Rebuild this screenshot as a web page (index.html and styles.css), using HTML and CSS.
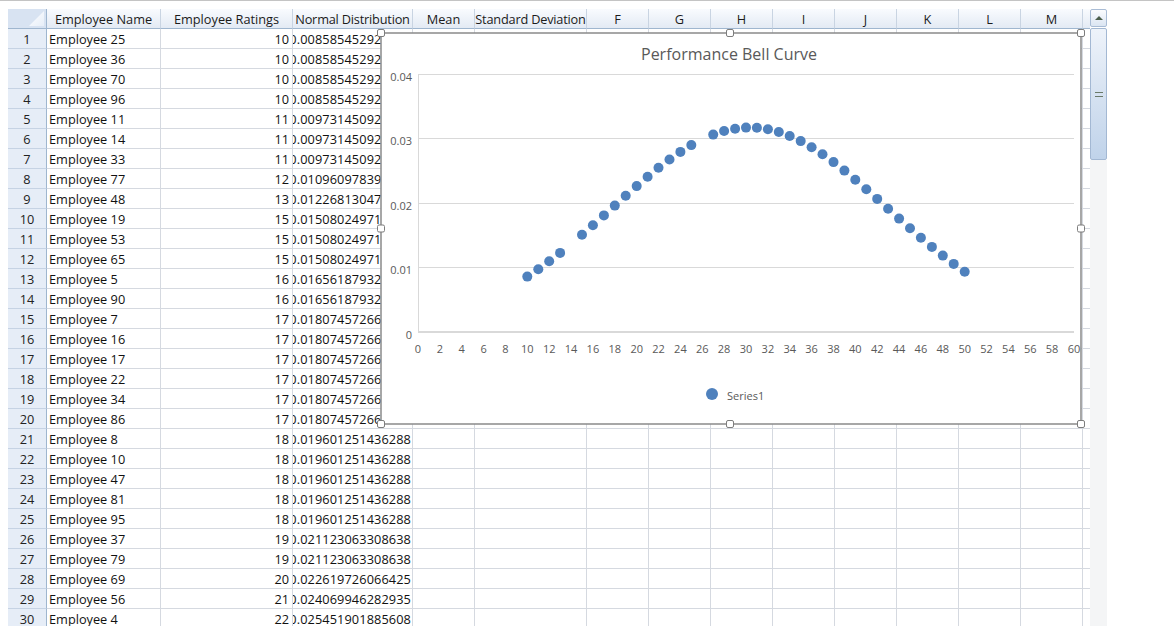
FILE: index.html
```html
<!DOCTYPE html>
<html>
<head>
<meta charset="utf-8">
<title>Performance Bell Curve</title>
<link rel="stylesheet" href="styles.css">
</head>
<body>
<div class="top-rule"></div>
<div class="app">
  <div class="sheet">
    <div class="hrow">
      <div class="corner"></div>
      <div>Employee Name</div><div>Employee Ratings</div><div class="tight">Normal Distribution</div><div>Mean</div><div class="tight">Standard Deviation</div>
      <div>F</div><div>G</div><div>H</div><div>I</div><div>J</div><div>K</div><div>L</div><div>M</div><div></div>
    </div>
    <div class="row"><b>1</b><span class="nm">Employee 25</span><span class="num">10</span><span class="dist">0.008585452924015</span><i></i><i></i><i></i><i></i><i></i><i></i><i></i><i></i><i></i><i></i><i></i></div>
    <div class="row"><b>2</b><span class="nm">Employee 36</span><span class="num">10</span><span class="dist">0.008585452924015</span><i></i><i></i><i></i><i></i><i></i><i></i><i></i><i></i><i></i><i></i><i></i></div>
    <div class="row"><b>3</b><span class="nm">Employee 70</span><span class="num">10</span><span class="dist">0.008585452924015</span><i></i><i></i><i></i><i></i><i></i><i></i><i></i><i></i><i></i><i></i><i></i></div>
    <div class="row"><b>4</b><span class="nm">Employee 96</span><span class="num">10</span><span class="dist">0.008585452924015</span><i></i><i></i><i></i><i></i><i></i><i></i><i></i><i></i><i></i><i></i><i></i></div>
    <div class="row"><b>5</b><span class="nm">Employee 11</span><span class="num">11</span><span class="dist">0.009731450921837</span><i></i><i></i><i></i><i></i><i></i><i></i><i></i><i></i><i></i><i></i><i></i></div>
    <div class="row"><b>6</b><span class="nm">Employee 14</span><span class="num">11</span><span class="dist">0.009731450921837</span><i></i><i></i><i></i><i></i><i></i><i></i><i></i><i></i><i></i><i></i><i></i></div>
    <div class="row"><b>7</b><span class="nm">Employee 33</span><span class="num">11</span><span class="dist">0.009731450921837</span><i></i><i></i><i></i><i></i><i></i><i></i><i></i><i></i><i></i><i></i><i></i></div>
    <div class="row"><b>8</b><span class="nm">Employee 77</span><span class="num">12</span><span class="dist">0.010960978391346</span><i></i><i></i><i></i><i></i><i></i><i></i><i></i><i></i><i></i><i></i><i></i></div>
    <div class="row"><b>9</b><span class="nm">Employee 48</span><span class="num">13</span><span class="dist">0.012268130472559</span><i></i><i></i><i></i><i></i><i></i><i></i><i></i><i></i><i></i><i></i><i></i></div>
    <div class="row"><b>10</b><span class="nm">Employee 19</span><span class="num">15</span><span class="dist">0.015080249713475</span><i></i><i></i><i></i><i></i><i></i><i></i><i></i><i></i><i></i><i></i><i></i></div>
    <div class="row"><b>11</b><span class="nm">Employee 53</span><span class="num">15</span><span class="dist">0.015080249713475</span><i></i><i></i><i></i><i></i><i></i><i></i><i></i><i></i><i></i><i></i><i></i></div>
    <div class="row"><b>12</b><span class="nm">Employee 65</span><span class="num">15</span><span class="dist">0.015080249713475</span><i></i><i></i><i></i><i></i><i></i><i></i><i></i><i></i><i></i><i></i><i></i></div>
    <div class="row"><b>13</b><span class="nm">Employee 5</span><span class="num">16</span><span class="dist">0.016561879324781</span><i></i><i></i><i></i><i></i><i></i><i></i><i></i><i></i><i></i><i></i><i></i></div>
    <div class="row"><b>14</b><span class="nm">Employee 90</span><span class="num">16</span><span class="dist">0.016561879324781</span><i></i><i></i><i></i><i></i><i></i><i></i><i></i><i></i><i></i><i></i><i></i></div>
    <div class="row"><b>15</b><span class="nm">Employee 7</span><span class="num">17</span><span class="dist">0.018074572665093</span><i></i><i></i><i></i><i></i><i></i><i></i><i></i><i></i><i></i><i></i><i></i></div>
    <div class="row"><b>16</b><span class="nm">Employee 16</span><span class="num">17</span><span class="dist">0.018074572665093</span><i></i><i></i><i></i><i></i><i></i><i></i><i></i><i></i><i></i><i></i><i></i></div>
    <div class="row"><b>17</b><span class="nm">Employee 17</span><span class="num">17</span><span class="dist">0.018074572665093</span><i></i><i></i><i></i><i></i><i></i><i></i><i></i><i></i><i></i><i></i><i></i></div>
    <div class="row"><b>18</b><span class="nm">Employee 22</span><span class="num">17</span><span class="dist">0.018074572665093</span><i></i><i></i><i></i><i></i><i></i><i></i><i></i><i></i><i></i><i></i><i></i></div>
    <div class="row"><b>19</b><span class="nm">Employee 34</span><span class="num">17</span><span class="dist">0.018074572665093</span><i></i><i></i><i></i><i></i><i></i><i></i><i></i><i></i><i></i><i></i><i></i></div>
    <div class="row"><b>20</b><span class="nm">Employee 86</span><span class="num">17</span><span class="dist">0.018074572665093</span><i></i><i></i><i></i><i></i><i></i><i></i><i></i><i></i><i></i><i></i><i></i></div>
    <div class="row"><b>21</b><span class="nm">Employee 8</span><span class="num">18</span><span class="dist">0.019601251436288</span><i></i><i></i><i></i><i></i><i></i><i></i><i></i><i></i><i></i><i></i><i></i></div>
    <div class="row"><b>22</b><span class="nm">Employee 10</span><span class="num">18</span><span class="dist">0.019601251436288</span><i></i><i></i><i></i><i></i><i></i><i></i><i></i><i></i><i></i><i></i><i></i></div>
    <div class="row"><b>23</b><span class="nm">Employee 47</span><span class="num">18</span><span class="dist">0.019601251436288</span><i></i><i></i><i></i><i></i><i></i><i></i><i></i><i></i><i></i><i></i><i></i></div>
    <div class="row"><b>24</b><span class="nm">Employee 81</span><span class="num">18</span><span class="dist">0.019601251436288</span><i></i><i></i><i></i><i></i><i></i><i></i><i></i><i></i><i></i><i></i><i></i></div>
    <div class="row"><b>25</b><span class="nm">Employee 95</span><span class="num">18</span><span class="dist">0.019601251436288</span><i></i><i></i><i></i><i></i><i></i><i></i><i></i><i></i><i></i><i></i><i></i></div>
    <div class="row"><b>26</b><span class="nm">Employee 37</span><span class="num">19</span><span class="dist">0.021123063308638</span><i></i><i></i><i></i><i></i><i></i><i></i><i></i><i></i><i></i><i></i><i></i></div>
    <div class="row"><b>27</b><span class="nm">Employee 79</span><span class="num">19</span><span class="dist">0.021123063308638</span><i></i><i></i><i></i><i></i><i></i><i></i><i></i><i></i><i></i><i></i><i></i></div>
    <div class="row"><b>28</b><span class="nm">Employee 69</span><span class="num">20</span><span class="dist">0.022619726066425</span><i></i><i></i><i></i><i></i><i></i><i></i><i></i><i></i><i></i><i></i><i></i></div>
    <div class="row"><b>29</b><span class="nm">Employee 56</span><span class="num">21</span><span class="dist">0.024069946282935</span><i></i><i></i><i></i><i></i><i></i><i></i><i></i><i></i><i></i><i></i><i></i></div>
    <div class="row"><b>30</b><span class="nm">Employee 4</span><span class="num">22</span><span class="dist">0.025451901885608</span><i></i><i></i><i></i><i></i><i></i><i></i><i></i><i></i><i></i><i></i><i></i></div>
  </div>
  <div class="vscroll">
    <div class="sb-up"><span class="sb-arrow"></span></div>
    <div class="sb-thumb"><span class="sb-grip"></span></div>
    <div class="sb-track"></div>
  </div>
</div>

<svg class="chart" viewBox="376 28 712 402" xmlns="http://www.w3.org/2000/svg">
  <rect x="381" y="33" width="700" height="391" fill="#ffffff" stroke="#8a8a8a" stroke-width="1.5"/>
  <text class="title" x="729" y="60" text-anchor="middle">Performance Bell Curve</text>
  <g stroke="#d9d9d9" stroke-width="1">
    <line x1="418" y1="74.5" x2="1074" y2="74.5"/>
    <line x1="418" y1="138.5" x2="1074" y2="138.5"/>
    <line x1="418" y1="203.5" x2="1074" y2="203.5"/>
    <line x1="418" y1="267.5" x2="1074" y2="267.5"/>
    <line x1="418.5" y1="74" x2="418.5" y2="332"/>
  </g>
  <line x1="418" y1="332" x2="1074" y2="332" stroke="#d9d9d9" stroke-width="2"/>
  <g class="ax" text-anchor="end">
    <text x="412" y="81">0.04</text>
    <text x="412" y="145">0.03</text>
    <text x="412" y="209.5">0.02</text>
    <text x="412" y="274">0.01</text>
    <text x="412" y="338.5">0</text>
  </g>
  <g class="ax" text-anchor="middle">
    <text x="418" y="353">0</text><text x="439.9" y="353">2</text><text x="461.7" y="353">4</text><text x="483.6" y="353">6</text>
    <text x="505.5" y="353">8</text><text x="527.3" y="353">10</text><text x="549.2" y="353">12</text><text x="571.1" y="353">14</text>
    <text x="592.9" y="353">16</text><text x="614.8" y="353">18</text><text x="636.7" y="353">20</text><text x="658.5" y="353">22</text>
    <text x="680.4" y="353">24</text><text x="702.3" y="353">26</text><text x="724.1" y="353">28</text><text x="746" y="353">30</text>
    <text x="767.9" y="353">32</text><text x="789.7" y="353">34</text><text x="811.6" y="353">36</text><text x="833.5" y="353">38</text>
    <text x="855.3" y="353">40</text><text x="877.2" y="353">42</text><text x="899.1" y="353">44</text><text x="920.9" y="353">46</text>
    <text x="942.8" y="353">48</text><text x="964.7" y="353">50</text><text x="986.5" y="353">52</text><text x="1008.4" y="353">54</text>
    <text x="1030.3" y="353">56</text><text x="1052.1" y="353">58</text><text x="1074" y="353">60</text>
  </g>
  <g fill="#4f81bd">
    <circle cx="527.3" cy="276.6" r="5"/><circle cx="538.3" cy="269.2" r="5"/><circle cx="549.2" cy="261.3" r="5"/><circle cx="560.1" cy="252.9" r="5"/>
    <circle cx="582.0" cy="234.7" r="5"/><circle cx="592.9" cy="225.2" r="5"/><circle cx="603.9" cy="215.4" r="5"/><circle cx="614.8" cy="205.6" r="5"/>
    <circle cx="625.7" cy="195.7" r="5"/><circle cx="636.7" cy="186.1" r="5"/><circle cx="647.6" cy="176.7" r="5"/><circle cx="658.5" cy="167.8" r="5"/>
    <circle cx="669.5" cy="159.5" r="5"/><circle cx="680.4" cy="151.9" r="5"/><circle cx="691.3" cy="145.1" r="5"/>
    <circle cx="713.2" cy="134.6" r="5"/><circle cx="724.1" cy="131.0" r="5"/><circle cx="735.1" cy="128.7" r="5"/><circle cx="746.0" cy="127.6" r="5"/>
    <circle cx="756.9" cy="127.8" r="5"/><circle cx="767.9" cy="129.3" r="5"/><circle cx="778.8" cy="132.0" r="5"/><circle cx="789.7" cy="136.0" r="5"/>
    <circle cx="800.7" cy="141.1" r="5"/><circle cx="811.6" cy="147.2" r="5"/><circle cx="822.5" cy="154.2" r="5"/><circle cx="833.5" cy="162.1" r="5"/>
    <circle cx="844.4" cy="170.6" r="5"/><circle cx="855.3" cy="179.7" r="5"/><circle cx="866.3" cy="189.2" r="5"/><circle cx="877.2" cy="198.9" r="5"/>
    <circle cx="888.1" cy="208.7" r="5"/><circle cx="899.1" cy="218.6" r="5"/><circle cx="910.0" cy="228.3" r="5"/><circle cx="920.9" cy="237.7" r="5"/>
    <circle cx="931.9" cy="246.9" r="5"/><circle cx="942.8" cy="255.6" r="5"/><circle cx="953.7" cy="263.9" r="5"/><circle cx="964.7" cy="271.7" r="5"/>
    <circle cx="712" cy="394" r="6"/>
  </g>
  <text class="ax" x="727" y="400">Series1</text>
  <g fill="#ffffff" stroke="#7d7d7d" stroke-width="1">
    <rect x="377.5" y="29.5" width="7" height="7" rx="1.5"/>
    <rect x="726.5" y="29.5" width="7" height="7" rx="1.5"/>
    <rect x="1077.5" y="29.5" width="7" height="7" rx="1.5"/>
    <rect x="377.5" y="225" width="7" height="7" rx="1.5"/>
    <rect x="1077.5" y="225" width="7" height="7" rx="1.5"/>
    <rect x="377.5" y="420.5" width="7" height="7" rx="1.5"/>
    <rect x="726.5" y="420.5" width="7" height="7" rx="1.5"/>
    <rect x="1077.5" y="420.5" width="7" height="7" rx="1.5"/>
  </g>
</svg>
</body>
</html>
```
FILE: styles.css
```css
html, body {
  margin: 0;
  padding: 0;
  background: #ffffff;
  overflow: hidden;
}
body {
  font-family: "Open Sans", "DejaVu Sans", sans-serif;
  width: 1174px;
  height: 626px;
  position: relative;
}
.top-rule {
  height: 1px;
  background: #c4c4c4;
}
.app {
  display: flex;
  align-items: flex-start;
  margin-top: 8px;
  padding-left: 8px;
}
.sheet {
  width: 1082px;
}
.hrow, .row {
  display: grid;
  grid-template-columns: 39px 114px 132px 120px 62px 112px repeat(8, 62px) 7px;
  height: 20px;
}
.hrow > div {
  box-sizing: border-box;
  background: linear-gradient(#f9fbfe, #e3eaf4);
  border-right: 1px solid #c9d4e2;
  border-bottom: 1px solid #9fb6cf;
  text-align: center;
  font-size: 12.75px;
  padding-top: 1px;
  line-height: 18px;
  color: #1b1b1b;
  white-space: nowrap;
  overflow: hidden;
}
.hrow > .tight {
  letter-spacing: -0.2px;
}
.hrow > div:last-child { border-right: 0; }
.hrow > .corner {
  position: relative;
  background: #d8e3f2;
  border-right-color: #9fb6cf;
}
.corner::after {
  content: "";
  position: absolute;
  right: 2px;
  bottom: 2px;
  width: 15px;
  height: 15px;
  background: linear-gradient(135deg, #ffffff, #e7eef8);
  clip-path: polygon(100% 0, 100% 100%, 0 100%);
}
.row > * {
  box-sizing: border-box;
  border-right: 1px solid #d5d9e0;
  border-bottom: 1px solid #d5d9e0;
  font-size: 12.75px;
  padding-top: 1px;
  line-height: 18px;
  white-space: nowrap;
  overflow: hidden;
  font-style: normal;
  font-weight: normal;
  color: #111111;
}
.row > *:last-child { border-right: 0; }
.row > b {
  background: #e6edf7;
  border-right-color: #9fb6cf;
  border-bottom-color: #c6d3e4;
  text-align: center;
  color: #222222;
}
.row > .nm { padding-left: 2px; }
.row > .num { text-align: right; padding-right: 3px; }
.row > .dist {
  display: flex;
  justify-content: flex-end;
  padding-right: 1px;
  letter-spacing: 0.1px;
}
.vscroll {
  width: 17px;
  height: 620px;
  display: flex;
  flex-direction: column;
}
.sb-up {
  box-sizing: border-box;
  height: 18px;
  border: 1px solid #a9bcd5;
  border-radius: 2px;
  background: linear-gradient(#fbfcfe, #dbe5f2);
  display: flex;
  align-items: center;
  justify-content: center;
}
.sb-arrow {
  width: 0;
  height: 0;
  border-left: 4px solid transparent;
  border-right: 4px solid transparent;
  border-bottom: 4px solid #4c5f4c;
}
.sb-thumb {
  box-sizing: border-box;
  height: 132px;
  margin-top: 1px;
  border: 1px solid #a3b8d3;
  border-radius: 2px;
  background: linear-gradient(#eef3fa, #d6e2f1 50%, #c0d3ea);
  display: flex;
  align-items: center;
  justify-content: center;
}
.sb-grip {
  width: 8px;
  height: 3px;
  border-top: 1px solid #6a7a6a;
  border-bottom: 1px solid #6a7a6a;
}
.sb-track {
  flex: 1;
  background: #f4f5f6;
}
.chart {
  position: absolute;
  left: 376px;
  top: 28px;
  width: 712px;
  height: 402px;
}
.chart .title {
  font-family: "Open Sans", sans-serif;
  font-size: 16px;
  fill: #595959;
}
.chart .ax {
  font-family: "Open Sans", sans-serif;
  font-size: 11px;
  fill: #595959;
}
```
